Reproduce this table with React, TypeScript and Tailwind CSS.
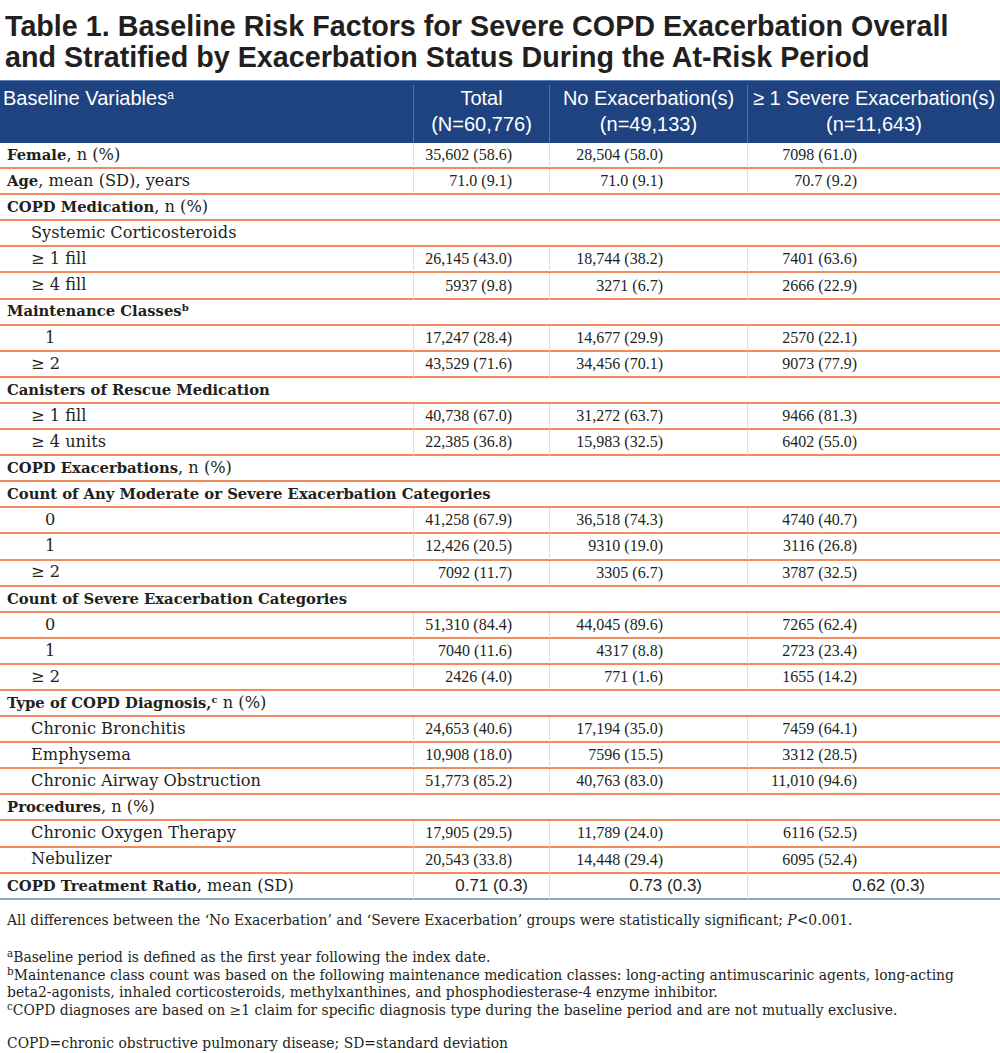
// Table 1: baseline risk factors for severe COPD exacerbation.

import type { ReactNode } from "react";

type Row =
  | { kind: "section"; label: ReactNode; indent?: boolean }
  | { kind: "data"; label: ReactNode; indent?: 0 | 1 | 2; vals: [string, string, string] };

const serif = "font-['DejaVu_Serif',serif]";

const B = ({ children }: { children: ReactNode }) => (
  <span className="font-bold text-[14.8px]">{children}</span>
);

const rows: Row[] = [
  { kind: "data", label: <><B>Female</B>, n (%)</>, vals: ["35,602 (58.6)", "28,504 (58.0)", "7098 (61.0)"] },
  { kind: "data", label: <><B>Age</B>, mean (SD), years</>, vals: ["71.0 (9.1)", "71.0 (9.1)", "70.7 (9.2)"] },
  { kind: "section", label: <><B>COPD Medication</B>, n (%)</> },
  { kind: "section", label: "Systemic Corticosteroids", indent: true },
  { kind: "data", indent: 1, label: "≥ 1 fill", vals: ["26,145 (43.0)", "18,744 (38.2)", "7401 (63.6)"] },
  { kind: "data", indent: 1, label: "≥ 4 fill", vals: ["5937 (9.8)", "3271 (6.7)", "2666 (22.9)"] },
  { kind: "section", label: <><B>Maintenance Classes</B><sup className="font-bold text-[10px]">b</sup></> },
  { kind: "data", indent: 2, label: "1", vals: ["17,247 (28.4)", "14,677 (29.9)", "2570 (22.1)"] },
  { kind: "data", indent: 1, label: "≥ 2", vals: ["43,529 (71.6)", "34,456 (70.1)", "9073 (77.9)"] },
  { kind: "section", label: <B>Canisters of Rescue Medication</B> },
  { kind: "data", indent: 1, label: "≥ 1 fill", vals: ["40,738 (67.0)", "31,272 (63.7)", "9466 (81.3)"] },
  { kind: "data", indent: 1, label: "≥ 4 units", vals: ["22,385 (36.8)", "15,983 (32.5)", "6402 (55.0)"] },
  { kind: "section", label: <><B>COPD Exacerbations</B>, n (%)</> },
  { kind: "section", label: <B>Count of Any Moderate or Severe Exacerbation Categories</B> },
  { kind: "data", indent: 2, label: "0", vals: ["41,258 (67.9)", "36,518 (74.3)", "4740 (40.7)"] },
  { kind: "data", indent: 2, label: "1", vals: ["12,426 (20.5)", "9310 (19.0)", "3116 (26.8)"] },
  { kind: "data", indent: 1, label: "≥ 2", vals: ["7092 (11.7)", "3305 (6.7)", "3787 (32.5)"] },
  { kind: "section", label: <B>Count of Severe Exacerbation Categories</B> },
  { kind: "data", indent: 2, label: "0", vals: ["51,310 (84.4)", "44,045 (89.6)", "7265 (62.4)"] },
  { kind: "data", indent: 2, label: "1", vals: ["7040 (11.6)", "4317 (8.8)", "2723 (23.4)"] },
  { kind: "data", indent: 1, label: "≥ 2", vals: ["2426 (4.0)", "771 (1.6)", "1655 (14.2)"] },
  { kind: "section", label: <><B>Type of COPD Diagnosis,</B><sup className="font-bold text-[10px]">c</sup> n (%)</> },
  { kind: "data", indent: 1, label: "Chronic Bronchitis", vals: ["24,653 (40.6)", "17,194 (35.0)", "7459 (64.1)"] },
  { kind: "data", indent: 1, label: "Emphysema", vals: ["10,908 (18.0)", "7596 (15.5)", "3312 (28.5)"] },
  { kind: "data", indent: 1, label: "Chronic Airway Obstruction", vals: ["51,773 (85.2)", "40,763 (83.0)", "11,010 (94.6)"] },
  { kind: "section", label: <><B>Procedures</B>, n (%)</> },
  { kind: "data", indent: 1, label: "Chronic Oxygen Therapy", vals: ["17,905 (29.5)", "11,789 (24.0)", "6116 (52.5)"] },
  { kind: "data", indent: 1, label: "Nebulizer", vals: ["20,543 (33.8)", "14,448 (29.4)", "6095 (52.4)"] },
];

const indentClass = ["pl-[7px]", "pl-[31px]", "pl-[45px]"];
const valPad = ["pr-[37px]", "pr-[84px]", "pr-[143px]"];

function TableRow({ row }: { row: Row }) {
  if (row.kind === "section") {
    return (
      <div
        className={`col-span-4 h-[26.1px] flex items-center border-b-2 border-[#f28a5e] text-[16.2px] text-[#231f20] ${serif} ${
          row.indent ? "pl-[31px]" : "pl-[7px]"
        }`}
      >
        <span>{row.label}</span>
      </div>
    );
  }
  return (
    <>
      <div
        className={`h-[26.1px] flex items-center border-b-2 border-[#f28a5e] text-[16.2px] text-[#231f20] ${serif} ${
          indentClass[row.indent ?? 0]
        }`}
      >
        <span>{row.label}</span>
      </div>
      {row.vals.map((v, i) => (
        <div
          key={i}
          className={`h-[26.1px] flex items-center justify-end border-b-2 border-l border-b-[#f28a5e] border-l-[#fcd6c1] text-[16px] text-[#231f20] font-['Liberation_Serif',serif] ${valPad[i]}`}
        >
          {v}
        </div>
      ))}
    </>
  );
}

export default function App() {
  return (
    <div className="w-[1000px] bg-white">
      <h1 className="pt-[11px] pb-[7px] pl-[5px] text-[28.7px] leading-[31px] font-bold text-[#231f20] font-['Liberation_Sans',Arial,sans-serif]">
        Table 1. Baseline Risk Factors for Severe COPD Exacerbation Overall
        <br />
        and Stratified by Exacerbation Status During the At-Risk Period
      </h1>

      <div className="grid grid-cols-[413px_136px_198px_253px]">
        {/* header */}
        <div className="h-[63px] bg-[#1e4380] border-t border-[#5c7fb5] pl-[3px] pt-[4px] text-white text-[20px] leading-[26px] font-['Liberation_Sans',Arial,sans-serif]">
          Baseline Variables<sup className="text-[12px]">a</sup>
        </div>
        {[
          ["Total", "(N=60,776)"],
          ["No Exacerbation(s)", "(n=49,133)"],
          ["≥ 1 Severe Exacerbation(s)", "(n=11,643)"],
        ].map(([a, b]) => (
          <div
            key={a}
            className="h-[63px] bg-[#1e4380] border-t border-[#5c7fb5] flex pt-[2px]"
          >
            <div className="w-px mt-[2px] bg-[#7d5c86]" />
            <div className="flex-1 pt-[2px] text-center text-white text-[20px] leading-[26px] font-['Liberation_Sans',Arial,sans-serif]">
              {a}
              <br />
              {b}
            </div>
          </div>
        ))}

        {rows.map((r, i) => (
          <TableRow key={i} row={r} />
        ))}

        {/* last row, set in a sans face */}
        <div className={`h-[26.1px] flex items-center border-b-2 border-[#8ba2c9] pl-[7px] text-[16.2px] text-[#231f20] ${serif}`}>
          <span>
            <B>COPD Treatment Ratio</B>, mean (SD)
          </span>
        </div>
        {["0.71 (0.3)", "0.73 (0.3)", "0.62 (0.3)"].map((v, i) => (
          <div
            key={i}
            className={`h-[26.1px] flex items-center justify-end border-b-2 border-l border-b-[#8ba2c9] border-l-[#fcd6c1] text-[17px] text-[#231f20] font-['Liberation_Sans',Arial,sans-serif] ${
              ["pr-[21px]", "pr-[45px]", "pr-[75px]"][i]
            }`}
          >
            {v}
          </div>
        ))}
      </div>

      <div className={`pl-[7px] pt-[12px] text-[13.9px] leading-[17.5px] text-[#231f20] ${serif}`}>
        <p>
          All differences between the ‘No Exacerbation’ and ‘Severe Exacerbation’ groups were
          statistically significant; <i>P</i>&lt;0.001.
        </p>
        <p className="mt-[20px]">
          <sup>a</sup>Baseline period is defined as the first year following the index date.
          <br />
          <sup>b</sup>Maintenance class count was based on the following maintenance medication
          classes: long-acting antimuscarinic agents, long-acting
          <br />
          beta2-agonists, inhaled corticosteroids, methylxanthines, and phosphodiesterase-4 enzyme
          inhibitor.
          <br />
          <sup>c</sup>COPD diagnoses are based on ≥1 claim for specific diagnosis type during the
          baseline period and are not mutually exclusive.
        </p>
        <p className="mt-[16px]">COPD=chronic obstructive pulmonary disease; SD=standard deviation</p>
      </div>
    </div>
  );
}
